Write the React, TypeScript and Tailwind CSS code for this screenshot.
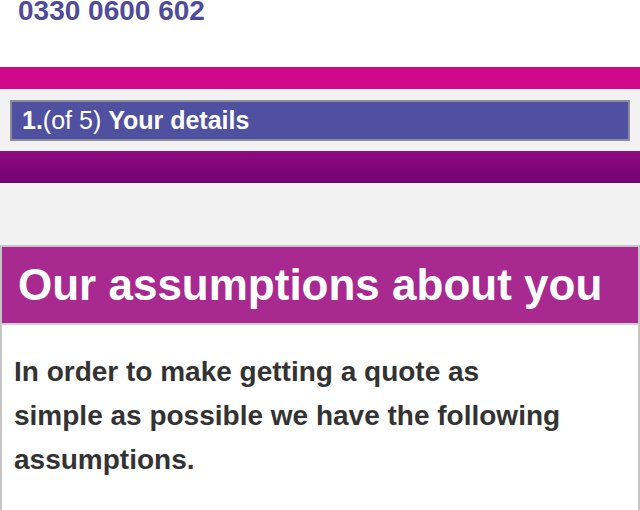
export default function App() {
  return (
    <div className="flex h-[510px] w-[640px] flex-col overflow-hidden bg-white font-['Liberation_Sans',Arial,sans-serif]">
      {/* Phone header */}
      <div className="flex h-[67px] shrink-0 items-start bg-white pl-[18px]">
        <p className="relative -top-[3px] text-[28px] leading-[28px] font-bold text-[#4f4b9b]">0330 0600 602</p>
      </div>

      <div className="h-[22px] shrink-0 bg-[#d0098a]" />

      {/* Step bar */}
      <div className="shrink-0 bg-[#f2f2f2] px-[10px] pt-[11px] pb-[10px]">
        <div className="h-[41px] border-2 border-[#8c8c9c] bg-[#5050a0] pl-[10px] text-[25px] leading-[37px] text-white">
          <span className="font-bold">1.</span>
          <span>(of 5) </span>
          <span className="font-bold">Your details</span>
        </div>
      </div>

      <div className="h-[32px] shrink-0 bg-gradient-to-b from-[#900c82] to-[#730073]" />

      <div className="h-[62px] shrink-0 bg-[#f2f2f2]" />

      {/* Assumptions card */}
      <div className="flex-1 border-x-2 border-t-2 border-[#c4c4c4] bg-white">
        <div className="h-[76px] bg-[#a8298f] pl-[16px] text-[44px] leading-[76px] font-bold text-white">
          Our assumptions about you
        </div>
        <div className="h-[2px] bg-[#d8cbd6]" />
        <p className="w-[570px] pl-[12px] pt-[25px] text-[28px] leading-[44px] font-bold text-[#333333]">
          In order to make getting a quote as simple as possible we have the following assumptions.
        </p>
      </div>
    </div>
  );
}
